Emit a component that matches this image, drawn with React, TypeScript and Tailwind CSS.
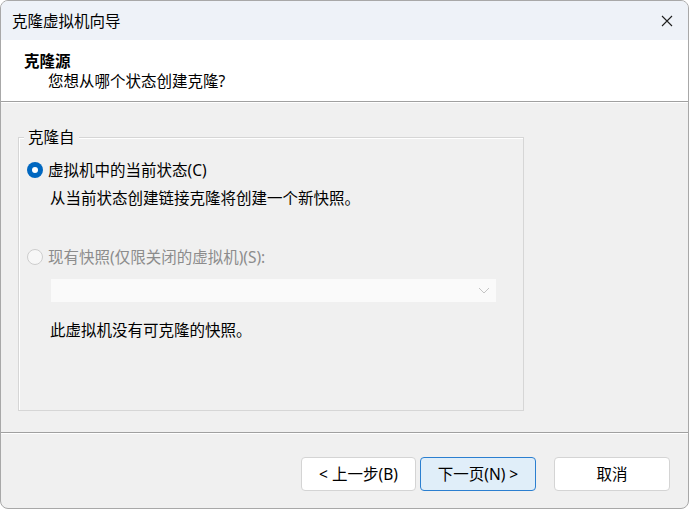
import React from "react";

const FONT = { fontFamily: '"Noto Sans", "Noto Sans CJK SC", sans-serif' };

export default function App() {
  return (
    <div className="w-[689px] h-[509px] bg-white" style={FONT}>
      <div className="w-full h-full rounded-[8px] border border-[#a8a8a8] overflow-hidden flex flex-col bg-[#f0f0f0] text-[#1a1a1a]">
        {/* Title bar */}
        <div className="h-[39px] shrink-0 bg-[#eef2f8] flex items-center justify-between pl-[11px] pr-[10px]">
          <span className="text-[15.5px] leading-[20px] text-black">克隆虚拟机向导</span>
          <svg width="12" height="12" viewBox="0 0 12 12" className="mr-[5px]">
            <path d="M1 1 L11 11 M11 1 L1 11" stroke="#1f1f1f" strokeWidth="1.1" fill="none" />
          </svg>
        </div>
        {/* Header */}
        <div className="h-[62px] shrink-0 bg-white border-b border-[#a0a0a0] pl-[23px] pt-[11px]">
          <div className="text-[15.5px] leading-[20px] font-bold text-black">克隆源</div>
          <div className="text-[15.5px] leading-[20px] pl-[24px] text-black">您想从哪个状态创建克隆?</div>
        </div>
        {/* Body */}
        <div className="flex-1 border-t border-white pl-[17px] pt-[34px]">
          <div className="relative w-[506px] h-[274px] border border-[#d6d6d6] shadow-[inset_1px_1px_0_#ffffff]">
            <span className="absolute -top-[11px] left-[5px] bg-[#f0f0f0] px-[4px] text-[15.5px] leading-[20px] text-black">
              克隆自
            </span>
            <div className="pt-[22px] pl-[8px] flex items-center gap-[5px] h-[42px]">
              <span className="w-[16px] h-[16px] rounded-full bg-[#0067c0] flex items-center justify-center shrink-0">
                <span className="w-[6px] h-[6px] rounded-full bg-white" />
              </span>
              <span className="text-[15.5px] leading-[20px] text-black">虚拟机中的当前状态(C)</span>
            </div>
            <div className="mt-[8px] pl-[31px] text-[15.5px] leading-[20px] text-black">
              从当前状态创建链接克隆将创建一个新快照。
            </div>
            <div className="mt-[39px] pl-[8px] flex items-center gap-[5px] h-[20px]">
              <span className="w-[16px] h-[16px] rounded-full border border-[#cdcdcd] bg-[#f7f7f7] shrink-0" />
              <span className="text-[15.5px] leading-[20px] text-[#8c8c8c]">现有快照(仅限关闭的虚拟机)(S):</span>
            </div>
            <div className="mt-[12px] ml-[32px] w-[445px] h-[23px] bg-[#fafafa] flex items-center justify-end pr-[6px]">
              <svg width="12" height="7" viewBox="0 0 12 7">
                <path d="M1 1 L6 6 L11 1" stroke="#c4c4c4" strokeWidth="1" fill="none" />
              </svg>
            </div>
            <div className="mt-[18px] pl-[31px] text-[15.5px] leading-[20px] text-black">
              此虚拟机没有可克隆的快照。
            </div>
          </div>
        </div>
        {/* Footer */}
        <div className="h-[76px] shrink-0 border-t border-[#a0a0a0] shadow-[inset_0_1px_0_#ffffff] pt-[24px] pr-[18px] flex justify-end items-start">
          <button className="w-[115px] h-[34px] rounded-[4px] bg-white border border-[#d4d4d4] text-[15.5px] leading-[20px] text-black">
            &lt; 上一步(B)
          </button>
          <button className="ml-[4px] w-[116px] h-[34px] rounded-[4px] bg-[#e0eef9] border border-[#2b7fd0] text-[15.5px] leading-[20px] text-black">
            下一页(N) &gt;
          </button>
          <button className="ml-[18px] w-[116px] h-[34px] rounded-[4px] bg-white border border-[#d4d4d4] text-[15.5px] leading-[20px] text-black">
            取消
          </button>
        </div>
      </div>
    </div>
  );
}
